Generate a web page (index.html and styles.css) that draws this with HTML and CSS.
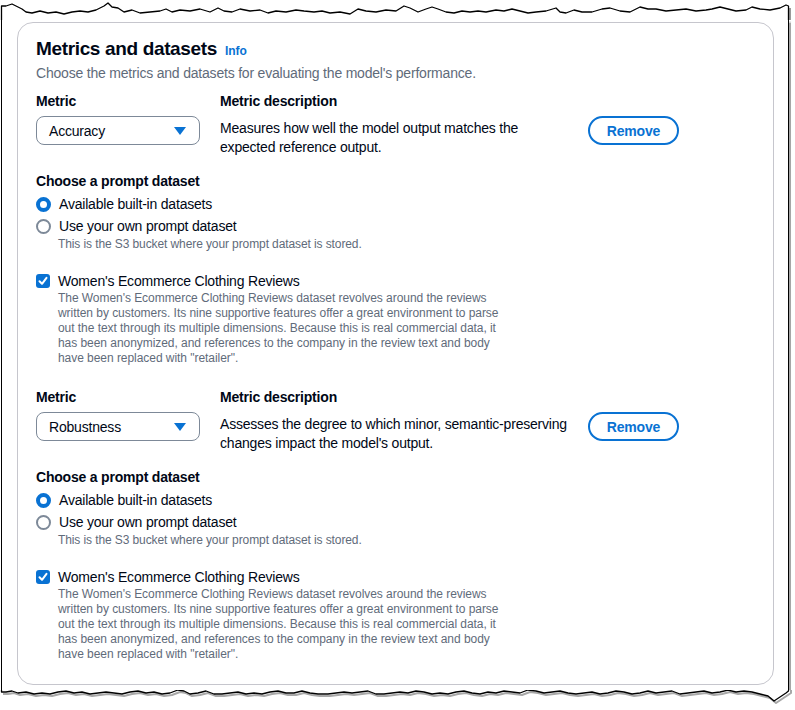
FILE: index.html
```html
<!DOCTYPE html>
<html lang="en">
<head>
<meta charset="utf-8">
<title>Metrics and datasets</title>
<link rel="stylesheet" href="styles.css">
</head>
<body>
<div class="sheet">
  <svg class="edge edge-top" width="795" height="20" viewBox="0 0 795 20">
    <polyline class="edge-shadow" points="790,8 790,20"/>
    <polyline class="edge-line" points="1.5,20 1.5,6 6,6 12,4 16,6 22,9 26,12 32,13 40,11 48,13 56,12 64,14 72,12 80,11 88,12 96,10 104,6 108,3 112,7 118,8 124,12 132,10 140,13 150,12 160,11 166,9 172,12 180,10 190,11 200,9 210,12 218,8 224,11 232,12 240,9 250,11 260,10 268,13 276,11 286,12 296,10 304,11 314,12 322,11 330,13 340,12 350,14 358,9 366,11 376,12 386,10 396,11 404,6 410,8 418,12 426,9 432,7 438,9 446,12 454,13 462,11 470,12 478,11 486,12 496,10 504,11 512,9 520,11 528,13 536,12 546,11 556,8 560,12 566,13 574,10 582,12 592,12 602,9 610,8 620,11 630,12 640,7 648,9 656,9 666,11 676,10 686,9 696,11 706,10 712,9 720,7 728,9 736,11 746,10 752,7 756,8 760,9 770,10 780,8 786,5 788.5,6 788.5,20"/>
  </svg>
  <div class="sheet-body">
    <section class="card">
      <header class="card-header">
        <h2 class="card-title">Metrics and datasets <a class="info-link" href="#">Info</a></h2>
        <p class="card-desc">Choose the metrics and datasets for evaluating the model's performance.</p>
      </header>

      <div class="metric">
        <div class="metric-grid">
          <div class="field-label">Metric</div>
          <div class="field-label">Metric description</div>
          <div></div>
          <div class="select"><span>Accuracy</span><span class="caret"></span></div>
          <p class="metric-desc">Measures how well the model output matches the<br>expected reference output.</p>
          <button class="btn" type="button">Remove</button>
        </div>
        <div class="dataset">
          <div class="field-label">Choose a prompt dataset</div>
          <div class="radio-group">
            <div class="radio-row"><span class="radio radio-on"></span><span>Available built-in datasets</span></div>
            <div class="radio-row"><span class="radio"></span><span>Use your own prompt dataset</span></div>
            <div class="helper">This is the S3 bucket where your prompt dataset is stored.</div>
          </div>
          <div class="check-row">
            <span class="checkbox"><svg width="14" height="14" viewBox="0 0 14 14"><polyline points="3.5,7.2 6,9.8 10.5,3.8" /></svg></span>
            <div class="check-body">
              <div class="check-label">Women's Ecommerce Clothing Reviews</div>
              <p class="check-desc">The Women's Ecommerce Clothing Reviews dataset revolves around the reviews<br>written by customers. Its nine supportive features offer a great environment to parse<br>out the text through its multiple dimensions. Because this is real commercial data, it<br>has been anonymized, and references to the company in the review text and body<br>have been replaced with "retailer".</p>
            </div>
          </div>
        </div>
      </div>

      <div class="metric">
        <div class="metric-grid">
          <div class="field-label">Metric</div>
          <div class="field-label">Metric description</div>
          <div></div>
          <div class="select"><span>Robustness</span><span class="caret"></span></div>
          <p class="metric-desc">Assesses the degree to which minor, semantic-preserving<br>changes impact the model's output.</p>
          <button class="btn" type="button">Remove</button>
        </div>
        <div class="dataset">
          <div class="field-label">Choose a prompt dataset</div>
          <div class="radio-group">
            <div class="radio-row"><span class="radio radio-on"></span><span>Available built-in datasets</span></div>
            <div class="radio-row"><span class="radio"></span><span>Use your own prompt dataset</span></div>
            <div class="helper">This is the S3 bucket where your prompt dataset is stored.</div>
          </div>
          <div class="check-row">
            <span class="checkbox"><svg width="14" height="14" viewBox="0 0 14 14"><polyline points="3.5,7.2 6,9.8 10.5,3.8" /></svg></span>
            <div class="check-body">
              <div class="check-label">Women's Ecommerce Clothing Reviews</div>
              <p class="check-desc">The Women's Ecommerce Clothing Reviews dataset revolves around the reviews<br>written by customers. Its nine supportive features offer a great environment to parse<br>out the text through its multiple dimensions. Because this is real commercial data, it<br>has been anonymized, and references to the company in the review text and body<br>have been replaced with "retailer".</p>
            </div>
          </div>
        </div>
      </div>
    </section>
  </div>
  <svg class="edge edge-bottom" width="795" height="20" viewBox="0 0 795 20">
    <polyline class="edge-shadow-soft" points="3,4 8,4 14,3 20,5 28,4 36,6 44,5 52,6 60,4 68,3 76,5 84,4 92,6 100,5 108,4 116,5 124,6 132,4 140,3 148,5 156,4 164,6 172,5 180,2 186,3 192,6 200,5 208,3 216,6 224,6 232,5 240,4 248,6 256,5 264,6 272,4 280,3 288,5 296,5 304,3 312,5 320,6 330,6 338,5 346,4 354,5 362,4 370,3 378,6 386,6 394,5 402,4 410,5 418,3 426,4 434,6 442,5 450,6 458,4 466,3 474,5 482,6 490,4 498,5 506,3 514,4 522,5 530,2 538,3 546,5 554,4 562,3 570,5 578,6 586,5 594,4 602,6 610,5 618,3 626,4 634,6 642,5 650,3 658,5 666,4 674,3 682,6 690,5 698,4 706,3 714,5 722,4 730,2 738,4 746,3 754,4 762,6 770,8 776,13 782,9 788,5 791,3 791,0"/>
    <polyline class="edge-line" points="1.5,0 1.5,2 6,2 12,1 18,3 26,2 34,4 42,3 50,4 58,2 66,1 74,3 82,2 90,4 98,3 106,2 114,3 122,4 130,2 138,1 146,3 154,2 162,4 170,3 178,0 184,1 190,4 198,3 206,1 214,4 222,4 230,3 238,2 246,4 254,3 262,4 270,2 278,1 286,3 294,3 302,1 310,3 318,4 328,4 336,3 344,2 352,3 360,2 368,1 376,4 384,4 392,3 400,2 408,3 416,1 424,2 432,4 440,3 448,4 456,2 464,1 472,3 480,4 488,2 496,3 504,1 512,2 520,3 528,0 536,1 544,3 552,2 560,1 568,3 576,4 584,3 592,2 600,4 608,3 616,1 624,2 632,4 640,3 648,1 656,3 664,2 672,1 680,4 688,3 696,2 704,1 712,3 720,2 728,0 736,2 744,1 752,2 760,4 768,6 774,11 780,7 786,3 788.5,1 788.5,0"/>
  </svg>
</div>
</body>
</html>
```

FILE: styles.css
```css
* { box-sizing: border-box; }

html, body {
  margin: 0;
  padding: 0;
  background: #ffffff;
}

body {
  font-family: "Liberation Sans", Arial, sans-serif;
  color: #000716;
  width: 795px;
  height: 710px;
  overflow: hidden;
  letter-spacing: -0.2px;
}

.sheet {
  width: 795px;
}

.edge {
  display: block;
}

.edge-line {
  fill: none;
  stroke: #000;
  stroke-width: 1.3;
  stroke-linejoin: round;
}

.edge-shadow {
  fill: none;
  stroke: #9a9a9a;
  stroke-width: 2;
}

.edge-shadow-soft {
  fill: none;
  stroke: #a8a8a8;
  stroke-width: 2;
  stroke-linejoin: round;
}

.sheet-body {
  margin-left: 1px;
  width: 788px;
  height: 670px;
  border-left: 1px solid #000;
  border-right: 1px solid #000;
  box-shadow: 2px 0 1px -0.5px rgba(0, 0, 0, 0.35);
  padding: 2px 14px 0 15px;
  background: #fff;
}

.card {
  width: 757px;
  height: 663px;
  border: 1px solid #c6c6cd;
  border-radius: 16px;
  padding: 14px 18px 20px 18px;
  background: #fff;
}

.card-title {
  margin: 0;
  font-size: 19px;
  line-height: 24px;
  font-weight: 700;
  color: #000716;
  letter-spacing: -0.35px;
}

.info-link {
  font-size: 12px;
  font-weight: 700;
  color: #0972d3;
  text-decoration: none;
  margin-left: 3px;
  letter-spacing: 0;
}

.card-desc {
  margin: 0;
  font-size: 14px;
  line-height: 20px;
  color: #5f6b7a;
}

.metric {
  margin-top: 8px;
}

.metric + .metric {
  margin-top: 21px;
}

.metric-grid {
  display: grid;
  grid-template-columns: 164px 348px 91px;
  column-gap: 20px;
  row-gap: 5px;
  align-items: start;
}

.field-label {
  font-size: 14px;
  line-height: 20px;
  font-weight: 700;
  color: #000716;
}

.select {
  height: 29px;
  border: 1.5px solid #7d8998;
  border-radius: 8px;
  display: flex;
  align-items: center;
  justify-content: space-between;
  padding: 0 13px 0 12px;
  font-size: 14px;
  color: #000716;
}

.caret {
  width: 0;
  height: 0;
  border-left: 6px solid transparent;
  border-right: 6px solid transparent;
  border-top: 8px solid #0972d3;
}

.metric-desc {
  margin: 0;
  padding-top: 3px;
  font-size: 14px;
  line-height: 19px;
  color: #000716;
  white-space: nowrap;
}

.btn {
  height: 29px;
  width: 91px;
  border: 2px solid #0972d3;
  border-radius: 20px;
  background: #fff;
  color: #0972d3;
  font-family: inherit;
  font-size: 14px;
  font-weight: 700;
  letter-spacing: -0.2px;
  padding: 0;
  cursor: pointer;
}

.dataset {
  margin-top: 14px;
}

.radio-group {
  margin-top: 2px;
}

.radio-row {
  display: flex;
  align-items: center;
  gap: 8px;
  height: 22px;
  font-size: 14px;
  color: #000716;
}

.radio {
  width: 15px;
  height: 15px;
  border-radius: 50%;
  border: 2px solid #7d8998;
  background: #fff;
  flex: none;
}

.radio-on {
  border: 4.5px solid #0972d3;
}

.helper {
  padding-left: 22px;
  font-size: 12px;
  line-height: 15px;
  color: #5f6b7a;
  letter-spacing: -0.1px;
}

.check-row {
  margin-top: 19px;
  display: flex;
  gap: 8px;
  align-items: flex-start;
}

.checkbox {
  flex: none;
  width: 14px;
  height: 14px;
  margin-top: 3px;
  border-radius: 3px;
  background: #0972d3;
  display: flex;
}

.checkbox polyline {
  fill: none;
  stroke: #fff;
  stroke-width: 2;
  stroke-linecap: round;
  stroke-linejoin: round;
}

.check-label {
  font-size: 14px;
  line-height: 20px;
  color: #000716;
}

.check-desc {
  margin: 0;
  font-size: 12px;
  line-height: 15px;
  color: #5f6b7a;
  letter-spacing: -0.05px;
  white-space: nowrap;
}
```
